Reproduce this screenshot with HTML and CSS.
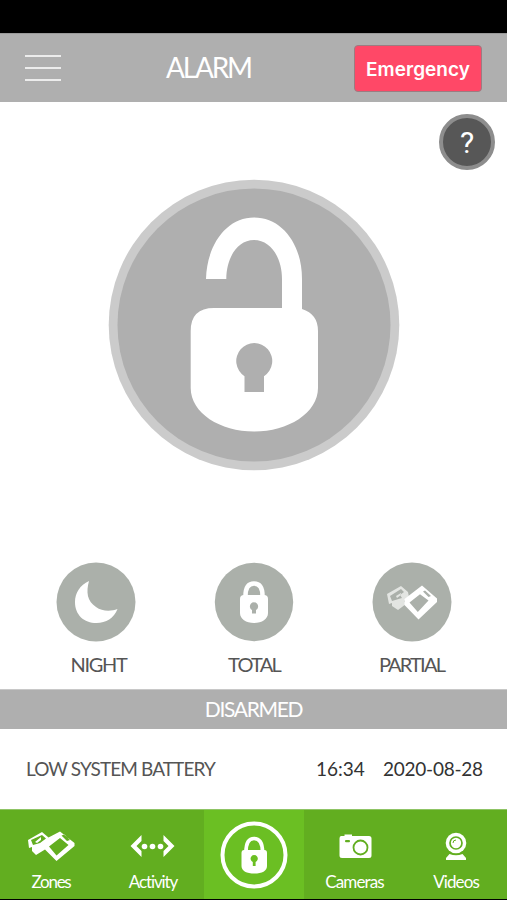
FILE: index.html
```html
<!DOCTYPE html>
<html lang="en">
<head>
<meta charset="utf-8">
<title>Alarm</title>
<link rel="stylesheet" href="styles.css">
</head>
<body>
<div class="app">
  <div class="status"></div>
  <header class="header">
    <div class="menu"><i></i><i></i><i></i></div>
    <h1 class="title">ALARM</h1>
    <button class="emergency">Emergency</button>
  </header>
  <main class="main">
    <button class="help">?</button>
    <div class="dial">
      <svg width="292" height="292" viewBox="108 179 292 292">
        <circle cx="254" cy="325" r="145.3" fill="#cbcbcb"/>
        <circle cx="254" cy="325" r="136.5" fill="#afafaf"/>
        <path fill="#fff" d="M206 279C207 244 227 217.500 254 217.500C282 217.500 302 244 302 279V309Q318 314 318 331V388C318 413 288 431.500 254.300 431.500C220 431.500 190.700 413 190.700 388V331Q190.700 308 214 308H282V279C282 258 271 240 254 240C237 240 226.500 258 226.300 279Z"/>
        <path fill="#afafaf" d="M244.500 392V376.200A18 18 0 1 1 264 376.200V392Z"/>
      </svg>
    </div>
    <div class="modes">
      <div class="mode">
        <svg width="80" height="80" viewBox="0 0 80 80"><circle cx="40" cy="40" r="39.500" fill="#abb0aa"/><path fill="#fff" d="M33 19C24 23 19 31 19 40C19 53 28 61 40.500 61C50 61 58 56 61.500 47C55 49.500 46 49.500 40 45C31 39 30 30 33 19Z"/></svg>
        <span class="label night">NIGHT</span>
      </div>
      <div class="mode">
        <svg width="80" height="80" viewBox="0 0 80 80"><circle cx="40" cy="40" r="39.200" fill="#abb0aa"/><path fill="none" stroke="#fff" stroke-width="4.500" d="M31.500 34C31.500 25 35 21.500 40 21.500S48.500 25 48.500 34"/><path fill="#fff" d="M30 33H50Q54 33 54 37V51C54 57 48 61 40 61S26 57 26 51V37Q26 33 30 33Z"/><path fill="#abb0aa" d="M38 51.500V48A4.100 4.100 0 1 1 42 48V51.500Z"/></svg>
        <span class="label total">TOTAL</span>
      </div>
      <div class="mode">
        <svg width="80" height="80" viewBox="0 0 80 80"><circle cx="40" cy="40" r="39.500" fill="#abb0aa"/><path fill="#e3e5e2" fill-rule="evenodd" d="M15 32L29 24L36 30L37 35L32 39L34 42L26 48L20 44V41L17 42ZM18 34L20 39L30 36L28 33L32 30L29 27ZM24 34L29 31L29 33L25 36Z"/><path fill="#fff" fill-rule="evenodd" d="M32.500 37L50 23.500L65 36.500V40L46.500 57.500L32.500 43ZM37.500 40.500L48 32.300L56.500 38.500L45.800 50ZM51 29.500L56.500 35L59 34L53 28.500Z"/></svg>
        <span class="label partial">PARTIAL</span>
      </div>
    </div>
  </main>
  <div class="state"><span>DISARMED</span></div>
  <div class="event"><span class="message">LOW SYSTEM BATTERY</span><span class="time">16:34</span><span class="date">2020-08-28</span></div>
  <nav class="nav">
    <a class="tab">
      <svg width="50" height="32" viewBox="26 830 50 32"><path fill="#fff" fill-rule="evenodd" d="M28 840L42 832L48.500 837.500L60 831.500L74.500 843V846L56.500 861L45 849.500L36 855L32 851V847L29 848ZM31 840L33 845L40 843L46 838.500L42 835ZM49 846.500L60 838L68.500 845L56.500 855.500ZM61.500 835.500L67 841L70 840L64.500 834.500ZM35 842L41 837L41 840L37 843Z"/></svg>
      <span class="zones">Zones</span>
    </a>
    <a class="tab">
      <svg width="50" height="32" viewBox="128 830 50 32"><path fill="#fff" d="M141.500 835V841L136.500 846L141.500 851V857L130.500 846ZM163.500 835V841L168.500 846L163.500 851V857L174.500 846Z"/><g fill="#fff"><circle cx="144.500" cy="846.500" r="2.800"/><circle cx="152.500" cy="846.500" r="2.800"/><circle cx="160.500" cy="846.500" r="2.800"/></g></svg>
      <span class="activity">Activity</span>
    </a>
    <a class="tab active">
      <svg width="70" height="70" viewBox="0 0 70 70"><circle cx="35" cy="35" r="31.500" fill="none" stroke="#fff" stroke-width="4"/><path fill="none" stroke="#fff" stroke-width="3.700" d="M27 32C27 22 30 18.500 35 18.500S43.500 22 43.500 32"/><path fill="#fff" d="M25 30H45.500Q48 30 48 33V46C48 51 43 53.500 35.300 53.500S22.500 51 22.500 46V33Q22.500 30 25 30Z"/><path fill="#6bbf23" d="M33.800 46V42A3.600 3.600 0 1 1 36.600 42V46Z"/></svg>
    </a>
    <a class="tab">
      <svg width="50" height="32" viewBox="330 830 50 32"><path fill="#fff" d="M341 836H344.500V834.500H352V836H369Q371.500 836 371.500 838.500V855.500Q371.500 858 369 858H342Q339.500 858 339.500 855.500V838.500Q339.500 836 341 836Z"/><circle cx="360.500" cy="847.500" r="7" fill="none" stroke="#62ae20" stroke-width="1.800"/><rect x="345" y="840" width="5" height="2.200" rx="1" fill="#62ae20"/></svg>
      <span class="cameras">Cameras</span>
    </a>
    <a class="tab">
      <svg width="50" height="32" viewBox="431 830 50 32"><circle cx="456" cy="843" r="10.300" fill="#fff"/><circle cx="456" cy="843" r="6" fill="none" stroke="#62ae20" stroke-width="1.700"/><path fill="none" stroke="#62ae20" d="M453 843Q453 840 456 840"/><path fill="#fff" d="M449.500 854Q456 856.500 462.500 854L466 858V860H446V858Z"/></svg>
      <span class="videos">Videos</span>
    </a>
  </nav>
</div>
</body>
</html>
```
FILE: styles.css
```css
* { box-sizing: border-box; }
body { margin: 0; background: #000; font-family: Lato, sans-serif; }
.app { width: 507px; height: 900px; display: flex; flex-direction: column; }
.status { height: 33px; background: #000; }
.header { height: 69px; background: #afafaf; border-top: 1px solid #999; display: grid; grid-template-columns: 61px 1fr 127px; align-items: center; padding: 0 26px 0 25px; }
.menu { width: 36px; display: flex; flex-direction: column; gap: 10px; }
.menu i { height: 2px; background: #ececec; }
.title { margin: -2px 0 0; padding-left: 80px; font-size: 28px; line-height: 34px; font-weight: 400; letter-spacing: -2.2px; color: #fff; }
.emergency { width: 128px; height: 47px; padding: 2px 0 0; border: 1px solid #9c7c81; border-radius: 4px; background: #ff4867; color: #fff; font: 600 19px/43px Inter, sans-serif; letter-spacing: .05px; }
.main { position: relative; height: 587px; background: #fff; display: flex; flex-direction: column; align-items: center; }
.help { position: absolute; top: 12px; right: 12px; width: 56px; height: 56px; padding: 2px 0 0; border: 4px solid #8d8d8d; border-radius: 50%; background: #575757; color: #fff; font: 400 30px/46px Roboto, sans-serif; }
.dial { height: 292px; margin-top: 77px; }
.dial svg, .mode svg, .tab svg { display: block; }
.modes { width: 396px; margin-top: 91px; display: flex; justify-content: space-between; }
.mode { width: 80px; display: flex; flex-direction: column; align-items: center; }
.label { margin-top: 9px; font-size: 20px; line-height: 26px; color: #555; white-space: nowrap; }
.night { letter-spacing: -1.3px; margin-left: 6px; }
.total { letter-spacing: -1.8px; margin-left: 1px; }
.partial { letter-spacing: -1.8px; }
.state { height: 40px; padding-bottom: 3px; background: #afafaf; border-top: 1px solid #c8c8c8; color: #fff; display: flex; align-items: center; justify-content: center; font-size: 21px; letter-spacing: -1.3px; }
.event { height: 80px; padding: 0 24px 1px 26px; background: #fff; color: #555; display: flex; align-items: center; font-size: 19px; white-space: nowrap; }
.message { letter-spacing: -.9px; }
.time { margin-left: auto; width: 67px; color: #333; }
.date { width: 100px; color: #333; letter-spacing: -.25px; }
.nav { height: 90px; background: #62ae20; border-top: 1px solid #8fc465; display: grid; grid-template-columns: 102px 102px 100px 101px 102px; }
.tab { display: flex; flex-direction: column; align-items: center; padding-top: 20px; color: #fff; font-size: 17px; line-height: 22px; }
.tab span { margin-top: 9px; letter-spacing: -.9px; }
.tab .zones { letter-spacing: -1.3px; }
.tab .activity { letter-spacing: -1.1px; }
.active { background: #6bbf23; padding-top: 10px; }
```
